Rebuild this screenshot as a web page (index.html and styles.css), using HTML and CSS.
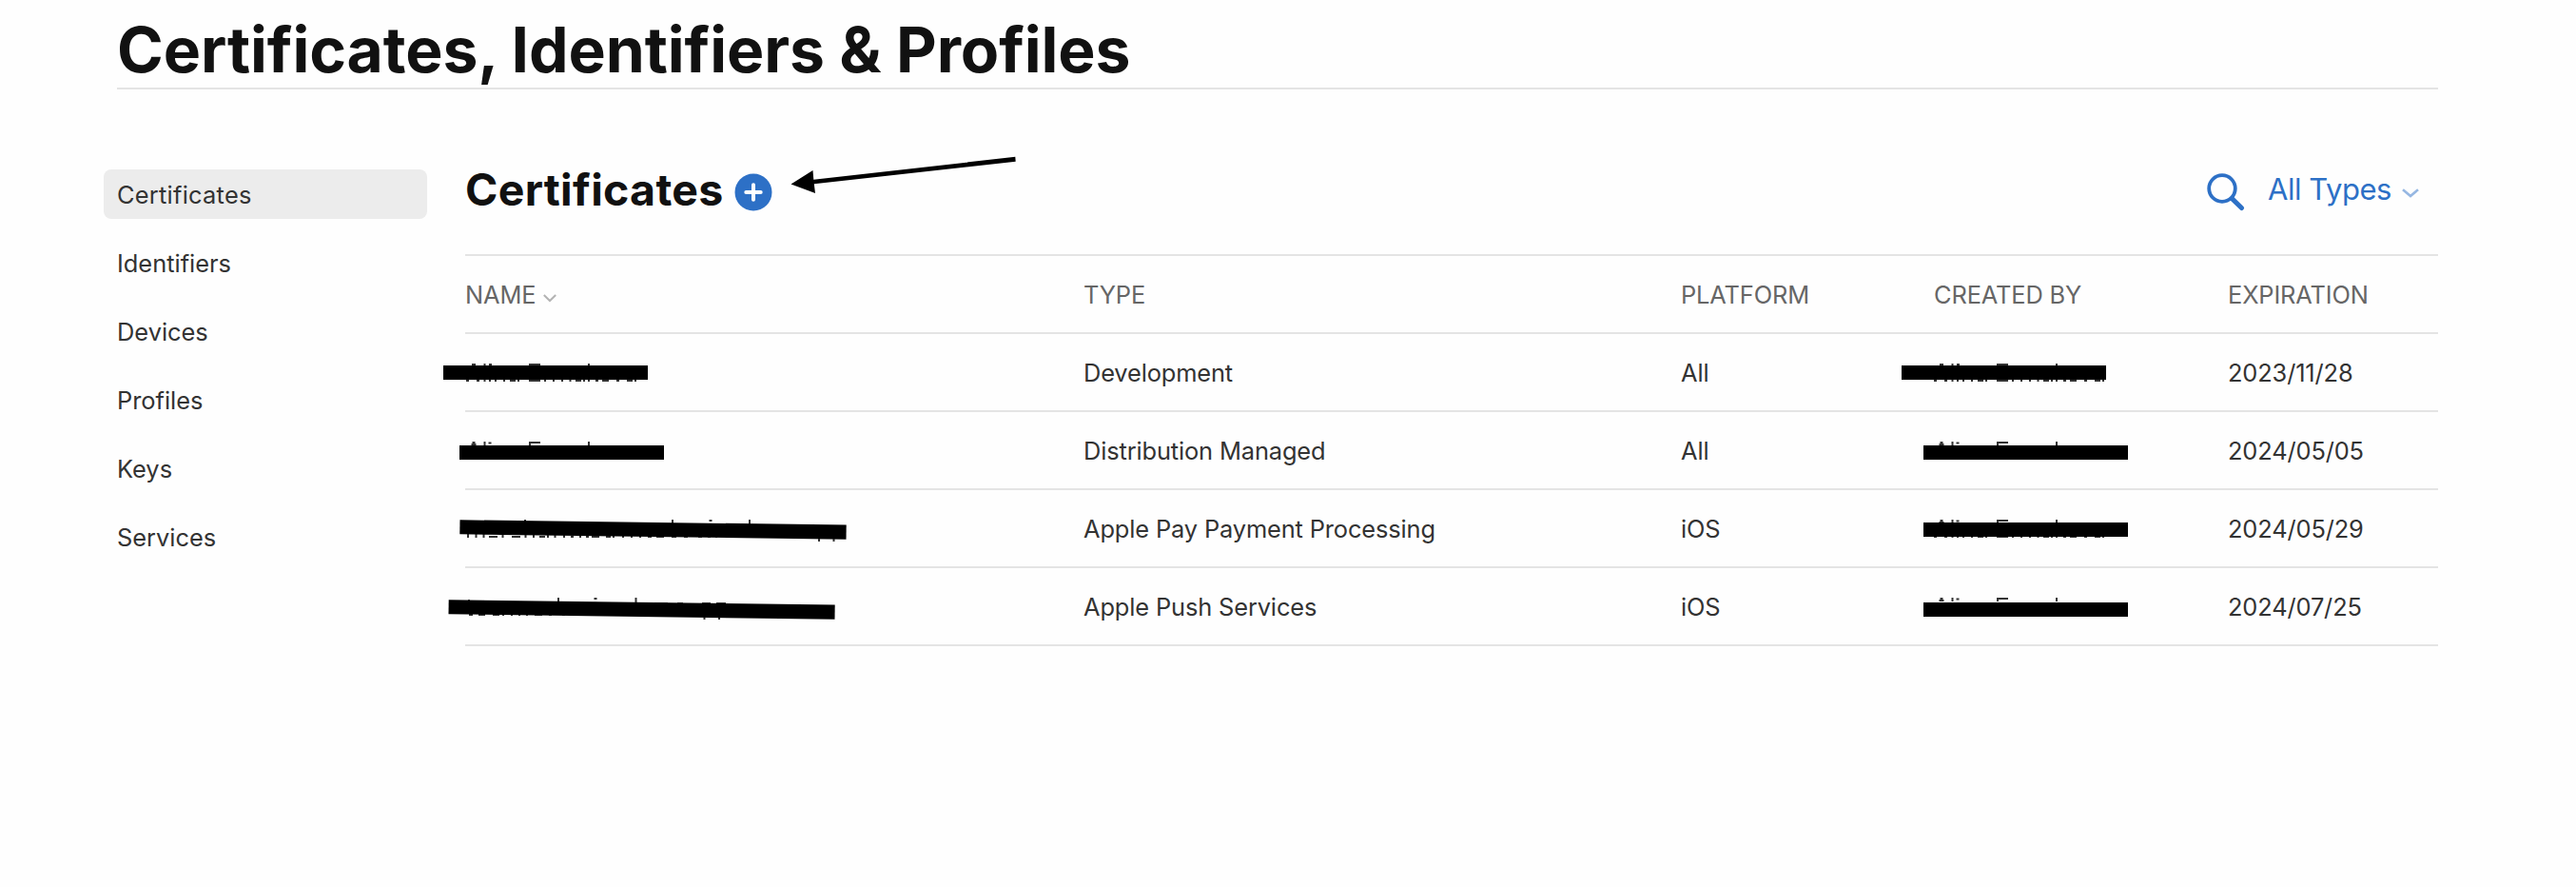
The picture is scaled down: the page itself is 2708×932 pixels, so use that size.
FILE: index.html
```html
<!DOCTYPE html>
<html lang="en">
<head>
<meta charset="utf-8">
<title>Certificates, Identifiers &amp; Profiles</title>
<link rel="stylesheet" href="styles.css">
</head>
<body>
<div class="page">
  <header class="page-header"><h1 class="page-title">Certificates, Identifiers &amp; Profiles</h1></header>
  <div class="layout">
    <nav class="sidebar">
      <a class="nav-item active">Certificates</a>
      <a class="nav-item">Identifiers</a>
      <a class="nav-item">Devices</a>
      <a class="nav-item">Profiles</a>
      <a class="nav-item">Keys</a>
      <a class="nav-item">Services</a>
    </nav>
    <main class="content">
      <div class="toolbar">
        <h2 class="section-title">Certificates</h2>
        <svg class="add" viewBox="0 0 40 40"><circle cx="20" cy="20" r="19.5" fill="#2d70c6"/><path d="M20 12.3v15.4M12.3 20h15.4" stroke="#fff" stroke-width="4" stroke-linecap="round"/></svg>
        <svg class="search" viewBox="0 0 40 40"><circle cx="16" cy="16" r="13.8" fill="none" stroke="#2d70c6" stroke-width="3.8"/><path d="M26.3 26.6L36.5 36.5" stroke="#2d70c6" stroke-width="5" stroke-linecap="round"/></svg>
        <span class="filter">All Types</span>
        <svg class="filter-arrow" viewBox="0 0 18 10"><path d="M1 1.2L9 8L17 1.2" fill="none" stroke="#96b7e2" stroke-width="2.6"/></svg>
      </div>
      <div class="table">
        <div class="row head">
          <span>NAME<svg class="sort" viewBox="0 0 14 9"><path d="M.8 1L7 7L13.2 1" fill="none" stroke="#b3b3b3" stroke-width="2"/></svg></span>
          <span>TYPE</span><span>PLATFORM</span><span>CREATED BY</span><span>EXPIRATION</span>
        </div>
        <div class="row"><span></span><span>Development</span><span>All</span><span></span><span>2023/11/28</span></div>
        <div class="row"><span></span><span>Distribution Managed</span><span>All</span><span></span><span>2024/05/05</span></div>
        <div class="row"><span></span><span>Apple Pay Payment Processing</span><span>iOS</span><span></span><span>2024/05/29</span></div>
        <div class="row"><span></span><span>Apple Push Services</span><span>iOS</span><span></span><span>2024/07/25</span></div>
      </div>
    </main>
  </div>
  <svg class="annotations" viewBox="0 0 2708 932">
    <defs>
      <!-- slivers left visible above and below a redaction bar -->
      <path id="above" d="M496 1h4M508.500 1h2M514 1h3M556 1h12M618 1h2"/>
      <path id="above-tall" d="M496.500 1h3M495.500 3h5M509.500 0v4M513.500 1.500h3M557 4V1h11M619 0v4"/>
      <path id="below" d="M490 1h3M501 1h3M508.500 1h2M514 1h2M520 1h2M529 1h2M536 1h6M544 1h2M556 1h12M572 1h2M581 1h2M590 1h2M598.500 1h2M605 1h6M613 1h2M618 1h2M626 1h3M633 1h7M648 1h3M659 1h6M667 1h2"/>
    </defs>
    <g fill="none" stroke="#333" stroke-width="2">
      <use href="#above" y="382"/><use href="#below" y="399"/>
      <use href="#above-tall" y="464"/>
      <use href="#above" x="1543" y="382"/><use href="#below" x="1543" y="399"/>
      <use href="#above-tall" x="1543" y="464"/>
      <use href="#above-tall" x="1543" y="546"/><use href="#below" x="1543" y="563"/>
      <use href="#above-tall" x="1543" y="628"/>
      <path d="M551 547h2M707 546v4M745.500 547h3M788 546v5M861 565v4M876.500 565v4"/>
      <path d="M492 560v5M500.500 560v5M508.500 560v5M514 564h9M528.500 560v5M538 564h9M552.500 560v5M561 560v5M567 564h6M576 560v5M583.500 560v5M593 560v5M600 564h3M609 564h2M616 564h3M622 564h8M637 564h5M645 560v5M655 560v5M664 560v5M673 560v5M681 564h4M690 564h8M706 564h5M719 564h4M734 564h4M744 564h3M752 564h2"/>
      <path d="M492 631h2M587 628v4M624.500 629h3M668.500 628v5M740.500 647v4M756 647v4"/>
      <path stroke-width="1" d="M688 633.500h14M712 633.500h6M738 633.500h9M753 633.500h10"/>
      <path d="M493 646h4M503 646h7M518 646h7M528 646h2M537 646h2M545 646h2M553 646h2M562 646h8M577 646h3M591 646h3"/>
    </g>
    <g fill="#000">
      <rect x="466" y="384" width="215" height="15"/>
      <rect x="483" y="468" width="215" height="15"/>
      <path d="M483.500 546.300L889.700 551.500L889.500 566.700L483.300 561.300Z"/>
      <path d="M471.700 630.300L877.700 635.500L877.500 650.700L471.500 645.300Z"/>
      <rect x="1999" y="384" width="215" height="15"/>
      <rect x="2022" y="468" width="215" height="15"/>
      <rect x="2022" y="549" width="215" height="15"/>
      <rect x="2022" y="633" width="215" height="15"/>
      <path d="M831.500 193.500L854.500 179L855.300 188.800L1067.300 164.800L1067.700 169.800L855.800 193.300L857 203Z"/>
    </g>
  </svg>
</div>
</body>
</html>
```
FILE: styles.css
```css
* { box-sizing: border-box; }
body { margin: 0; background: #fefefe; color: #333; font-family: Inter, "Liberation Sans", sans-serif; }
.page { position: relative; width: 2708px; height: 932px; overflow: hidden; }
.page-header { margin: 0 145px 0 123px; height: 94px; padding-top: 12px; border-bottom: 2px solid #e4e4e4; }
.page-title { margin: 0; font-size: 66px; line-height: 80px; font-weight: 700; color: #111; white-space: nowrap; letter-spacing: -0.12px; }
.layout { display: flex; padding: 84px 145px 0 109px; }
.sidebar { display: flex; flex-direction: column; gap: 20px; width: 340px; margin-right: 40px; }
.nav-item { height: 52px; padding: 0 14px; border-radius: 8px; line-height: 54px; font-size: 25.4px; }
.active { background: #ececec; letter-spacing: 0.25px; }
.content { flex: 1; }
.toolbar { display: flex; align-items: flex-start; height: 89px; }
.section-title { margin: 0; width: 283px; font-size: 46.500px; line-height: 42px; font-weight: 700; color: #111; white-space: nowrap; letter-spacing: 0.28px; }
.add { width: 40px; height: 40px; margin-top: 4px; }
.search { width: 40px; height: 40px; margin: 4px 24px 0 auto; }
.filter { width: 141px; font-size: 31px; line-height: 42px; color: #2d70c6; white-space: nowrap; letter-spacing: -0.45px; }
.filter-arrow { width: 18px; height: 10px; margin: 20px 20px 0 0; }
.table { border-top: 2px solid #e4e4e4; }
.row { display: grid; grid-template-columns: 650px 628px 266px 309px 1fr; height: 82px; border-bottom: 2px solid #e4e4e4; font-size: 25.4px; line-height: 82px; letter-spacing: -0.13px; white-space: nowrap; }
.head { color: #666; }
.sort { width: 14px; height: 9px; margin: 0 0 1px 8px; }
.annotations { position: absolute; left: 0; top: 0; width: 2708px; height: 932px; pointer-events: none; }
```
